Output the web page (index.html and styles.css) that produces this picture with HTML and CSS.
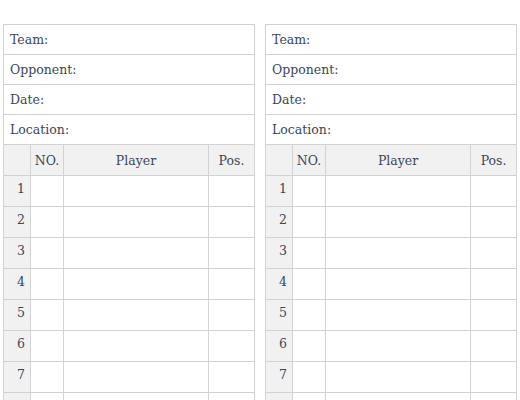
FILE: index.html
```html
<!DOCTYPE html>
<html>
<head>
<meta charset="utf-8">
<link rel="stylesheet" href="styles.css">
</head>
<body>
<div class="sheet">
  <table class="card">
    <colgroup><col class="c-idx"><col class="c-no"><col class="c-player"><col class="c-pos"></colgroup>
    <tr class="info"><td colspan="4">Team:</td></tr>
    <tr class="info"><td colspan="4">Opponent:</td></tr>
    <tr class="info"><td colspan="4">Date:</td></tr>
    <tr class="info"><td colspan="4">Location:</td></tr>
    <tr class="head"><th></th><th>NO.</th><th>Player</th><th>Pos.</th></tr>
    <tr class="row"><td class="idx">1</td><td></td><td></td><td></td></tr>
    <tr class="row"><td class="idx">2</td><td></td><td></td><td></td></tr>
    <tr class="row"><td class="idx">3</td><td></td><td></td><td></td></tr>
    <tr class="row"><td class="idx">4</td><td></td><td></td><td></td></tr>
    <tr class="row"><td class="idx">5</td><td></td><td></td><td></td></tr>
    <tr class="row"><td class="idx">6</td><td></td><td></td><td></td></tr>
    <tr class="row"><td class="idx">7</td><td></td><td></td><td></td></tr>
    <tr class="row"><td class="idx"></td><td></td><td></td><td></td></tr>
  </table>
  <table class="card">
    <colgroup><col class="c-idx"><col class="c-no"><col class="c-player"><col class="c-pos"></colgroup>
    <tr class="info"><td colspan="4">Team:</td></tr>
    <tr class="info"><td colspan="4">Opponent:</td></tr>
    <tr class="info"><td colspan="4">Date:</td></tr>
    <tr class="info"><td colspan="4">Location:</td></tr>
    <tr class="head"><th></th><th>NO.</th><th>Player</th><th>Pos.</th></tr>
    <tr class="row"><td class="idx">1</td><td></td><td></td><td></td></tr>
    <tr class="row"><td class="idx">2</td><td></td><td></td><td></td></tr>
    <tr class="row"><td class="idx">3</td><td></td><td></td><td></td></tr>
    <tr class="row"><td class="idx">4</td><td></td><td></td><td></td></tr>
    <tr class="row"><td class="idx">5</td><td></td><td></td><td></td></tr>
    <tr class="row"><td class="idx">6</td><td></td><td></td><td></td></tr>
    <tr class="row"><td class="idx">7</td><td></td><td></td><td></td></tr>
    <tr class="row"><td class="idx"></td><td></td><td></td><td></td></tr>
  </table>
</div>
</body>
</html>
```

FILE: styles.css
```css
html, body {
  margin: 0;
  padding: 0;
  background: #ffffff;
}
body {
  font-family: "DejaVu Serif", serif;
  font-size: 12.5px;
  color: #3b4656;
  overflow: hidden;
}
.sheet {
  display: flex;
  gap: 10px;
  padding: 24px 0 0 3px;
  align-items: flex-start;
}
.card {
  border-collapse: collapse;
  table-layout: fixed;
  width: 251px;
}
.c-idx { width: 27px; }
.c-no { width: 33px; }
.c-player { width: 145px; }
.c-pos { width: 46px; }
.card td, .card th {
  border: 1px solid #d2d2d2;
  padding: 0;
  font-weight: normal;
}
.info td {
  height: 29px;
  padding-left: 6px;
  text-align: left;
}
.head th {
  height: 30px;
  background: #f1f1f1;
  text-align: center;
}
.row td {
  height: 30px;
}
.row td.idx {
  height: 24px;
  background: #f1f1f1;
  text-align: right;
  padding-right: 5px;
  padding-bottom: 6px;
}
```
